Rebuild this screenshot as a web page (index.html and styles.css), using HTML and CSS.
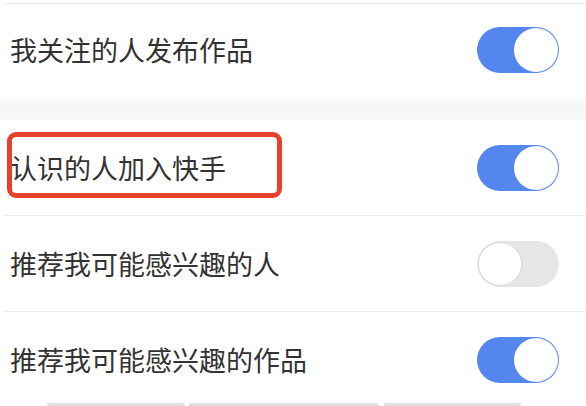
FILE: index.html
```html
<!DOCTYPE html>
<html lang="zh">
<head>
<meta charset="utf-8">
<link rel="stylesheet" href="styles.css">
</head>
<body>
<div class="page">
  <div class="group first">
    <div class="row">
      <span class="label">我关注的人发布作品</span>
      <span class="toggle on"><span class="knob"></span></span>
    </div>
  </div>
  <div class="gap"></div>
  <div class="group">
    <div class="row">
      <span class="label">认识的人加入快手</span>
      <span class="toggle on"><span class="knob"></span></span>
      <span class="highlight"></span>
    </div>
    <div class="row divided">
      <span class="label">推荐我可能感兴趣的人</span>
      <span class="toggle off"><span class="knob"></span></span>
    </div>
    <div class="row divided">
      <span class="label">推荐我可能感兴趣的作品</span>
      <span class="toggle on"><span class="knob"></span></span>
    </div>
  </div>
  <div class="tabs">
    <span class="tab t1"></span>
    <span class="tab t2"></span>
    <span class="tab t3"></span>
  </div>
</div>
</body>
</html>
```
FILE: styles.css
```css
html, body {
  margin: 0;
  padding: 0;
  background: #ffffff;
}
.page {
  width: 586px;
  height: 406px;
  overflow: hidden;
  font-family: "Noto Sans CJK SC", "Noto Sans", sans-serif;
  color: #333333;
}
.group.first {
  padding-top: 3px;
}
.group.first .row {
  border-top: 1px solid #e6e6e6;
  height: 91px;
}
.row {
  position: relative;
  display: flex;
  align-items: center;
  justify-content: space-between;
  margin-left: 5px;
  padding-left: 5px;
  padding-right: 27px;
  height: 95px;
}
.row.divided {
  border-top: 1px solid #ebebeb;
}
.label {
  font-size: 27px;
  line-height: 32px;
  letter-spacing: 0;
}
.gap {
  height: 25px;
  background: linear-gradient(#ffffff, #f6f6f6 35%, #f7f7f7);
}
.toggle {
  position: relative;
  box-sizing: border-box;
  width: 82px;
  height: 46px;
  border-radius: 23px;
  display: flex;
  align-items: center;
  padding: 1px;
}
.toggle.on {
  background: #5585ef;
  justify-content: flex-end;
}
.toggle.off {
  background: #e6e6e6;
  justify-content: flex-start;
}
.knob {
  box-sizing: border-box;
  width: 44px;
  height: 44px;
  border-radius: 50%;
  background: #ffffff;
}
.toggle.off .knob {
  border: 1px solid #d9d9d9;
}
.highlight {
  position: absolute;
  left: 2px;
  top: 12px;
  width: 275px;
  height: 66px;
  box-sizing: border-box;
  border: 5px solid #e8412b;
  border-radius: 9px;
}
.tabs {
  display: flex;
  padding-left: 47px;
  margin-top: -4px;
}
.tab {
  height: 8px;
  background: linear-gradient(#e4e4e4, #d4d4d4);
  border-radius: 2px 2px 0 0;
}
.t1 { width: 138px; }
.t2 { width: 190px; margin-left: 4px; }
.t3 { width: 137px; margin-left: 5px; }
```
